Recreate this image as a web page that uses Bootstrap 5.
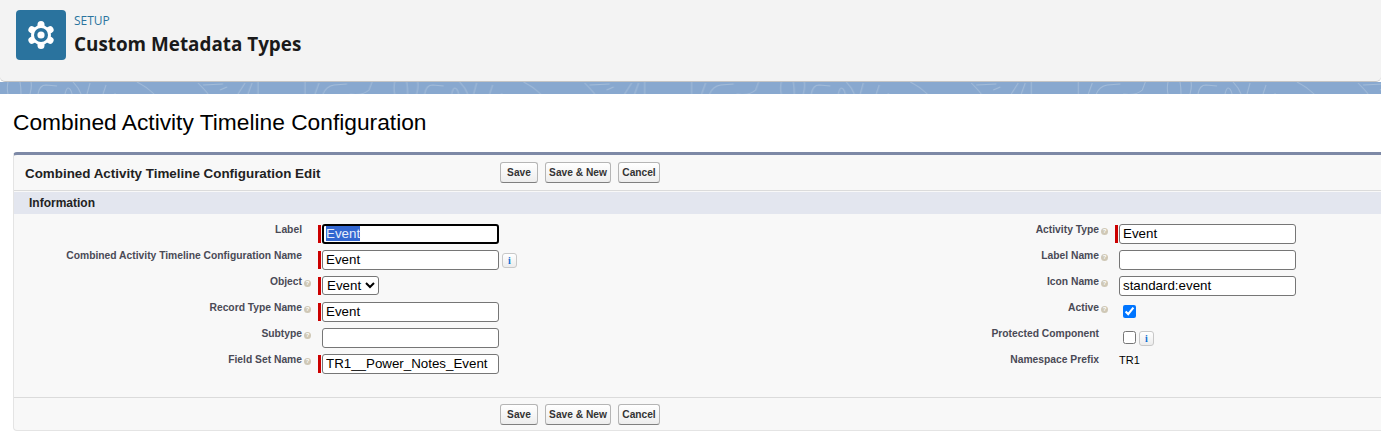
<!DOCTYPE html>
<html lang="en">
<head>
<meta charset="utf-8">
<title>Custom Metadata Types</title>
<link href="https://cdn.jsdelivr.net/npm/bootstrap@5.3.0/dist/css/bootstrap.min.css" rel="stylesheet">
<style>
html,body{height:444px;overflow:hidden;background:#fff;margin:0}
body{font-family:"Liberation Sans",Arial,sans-serif;color:#000}
.setup-head{height:82px;background:#f3f3f3;border-bottom:1px solid #c4c4c4;border-radius:0 0 5px 5px;padding:10px 16px 0;gap:8px}
.setup-tile{width:50px;height:50px;background:#2a739e;border-radius:4px}
.setup-eyebrow{font-family:"Open Sans",sans-serif;font-size:12px;line-height:14px;color:#2a739e;margin-top:4px}
.setup-title{font-family:"Open Sans",sans-serif;font-weight:700;font-size:18.85px;line-height:24px;color:#1a1a1a;margin-top:4px}
.band{height:12px;display:block;width:100%}
.page-name{font-size:22.75px;line-height:28px;font-weight:400;margin:0;padding:14px 0 0 13px;height:58px;color:#000}
.edit-panel{margin-left:13px;background:#f8f8f8;border:1px solid #e4e4e4;border-top:3px solid #7d89a6;border-right:0;border-radius:4px 0 0 4px;height:279px}
.panel-bar{height:36px;padding:0 0 0 11px;border-bottom:1px solid #dbdbdb}
.panel-bottom{height:33px;border-top:1px solid #dbdbdb;padding:6px 0 0 486px}
.bar-title{width:475px;font-size:13.4px;line-height:16px;padding-top:2px;font-weight:700;color:#222}
.bar-actions{gap:7px}
.sf-btn{font-family:"Liberation Sans",Arial,sans-serif;font-size:10.2px;font-weight:700;color:#333;height:21px;padding:0;white-space:nowrap;border:1px solid #b5b5b5;border-bottom-color:#7f7f7f;border-radius:3px;background:linear-gradient(#fff,#ededed)}
.btn-narrow{width:38px}.btn-wide{width:66px}.btn-mid{width:42px}
.section-bar{height:22px;background:#e3e6ef;margin-top:1px;padding-left:15px;font-size:12px;font-weight:700;line-height:22px;color:#222}
.form-area{display:grid;grid-template-columns:686px 1fr;padding-top:10px;flex:1}
.field-col{display:grid;grid-auto-rows:26px}
.left-col{grid-template-columns:297px 1fr}
.right-col{grid-template-columns:408px 1fr}
.field-name{font-size:10.3px;font-weight:700;color:#4a4a56;line-height:12px;text-align:right;white-space:nowrap}
.no-help{padding-right:9px}
.help-dot{display:inline-block;width:7px;height:7px;border-radius:50%;background:#cfc8b6;margin-left:2px;vertical-align:0;color:#fff;font-size:6px;line-height:7px;text-align:center}
.field-val{display:flex;align-items:flex-start;gap:3px;position:relative;padding-left:11px}
.req::before{content:"";position:absolute;left:7px;top:1px;width:3px;height:18px;background:#c00}
.sf-input{font-family:"Liberation Sans",Arial,sans-serif;font-size:13.33px;color:#000;width:177px;height:20px;border:1px solid #767676;border-radius:3px;padding:0 3px 2px;background:#fff;outline:0}
.sf-input.is-active{border:2px solid #000;padding:0 2px 2px}
.sf-input::selection{background:#3367d1;color:#e8eefc}
.sf-select{font-family:"Liberation Sans",Arial,sans-serif;font-size:13.33px;width:57px;height:19px;border:1px solid #767676;border-radius:3px;background:#fff;padding:0;color:#000}
.sf-check{width:13px;height:13px;margin:3px 0 0 4px;accent-color:#0075ff}
.info-btn{width:15px;height:15px;border:1px solid #c8c8c8;border-radius:3px;background:linear-gradient(#fff,#ececec);color:#0b6fd3;font:700 10px/13px "Liberation Serif",serif;text-align:center;margin-top:3px}
.plain-val{font-size:11px;color:#000;line-height:13px}
</style>
</head>
<body>
<header class="setup-head d-flex">
  <div class="setup-tile d-flex align-items-center justify-content-center">
    <svg width="30" height="30" viewBox="-15 -15 30 30" aria-hidden="true">
      <circle r="10" fill="#fff"/>
      <g stroke="#fff" stroke-width="7" stroke-linecap="round">
        <line x1="0" y1="-10.5" x2="0" y2="10.5"/>
        <line x1="-9.1" y1="-5.25" x2="9.1" y2="5.25"/>
        <line x1="-9.1" y1="5.25" x2="9.1" y2="-5.25"/>
      </g>
      <circle r="7" fill="#2a739e"/><circle r="3.6" fill="#fff"/>
    </svg>
  </div>
  <div>
    <div class="setup-eyebrow">SETUP</div>
    <div class="setup-title">Custom Metadata Types</div>
  </div>
</header>
<svg class="band" width="1381" height="12" aria-hidden="true">
  <defs><pattern id="swirl" width="386.67" height="12" patternUnits="userSpaceOnUse" x="0" y="0">
    <path fill="none" stroke="#a3bcd9" stroke-width="1" d="M8 0c-1 5-1 8 0 12M20 0c1 5 1 8 1 12M31 0c1 5 0 8-1 12M38 12c1-6 3-9 8-9l11 1M65 12c1-4 2-6 3-6s3 2 4 6M73 0c3 3 6 7 8 12M87 12l3-11M103 12l3-9M115 1v0M115 11v1M137 0c6 3 12 7 17 12M198 1c3 3 7 7 10 11M203 3l20-1M220 8l7-3M238 12l7-11M248 12l4-11M258 0v12M305 0v12M315 12l4-11M323 12c2-5 5-8 11-9l13-1M350 12c8 1 15 0 19-4l3-8"/>
  </pattern></defs>
  <rect width="100%" height="12" fill="#88a8cf"/>
  <rect width="100%" height="12" fill="url(#swirl)"/>
</svg>
<h1 class="page-name">Combined Activity Timeline Configuration</h1>
<main class="edit-panel d-flex flex-column">
  <div class="panel-bar d-flex align-items-center">
    <div class="bar-title">Combined Activity Timeline Configuration Edit</div>
    <div class="bar-actions d-flex"><button class="sf-btn btn-narrow">Save</button><button class="sf-btn btn-wide">Save &amp; New</button><button class="sf-btn btn-mid">Cancel</button></div>
  </div>
  <div class="section-bar">Information</div>
  <div class="form-area">
    <div class="field-col left-col">
      <div class="field-name no-help">Label</div><div class="field-val req"><input id="first" class="sf-input is-active" value="Event"></div>
      <div class="field-name no-help">Combined Activity Timeline Configuration Name</div><div class="field-val req"><input class="sf-input" value="Event"><span class="info-btn">i</span></div>
      <div class="field-name">Object<span class="help-dot">?</span></div><div class="field-val req"><select class="sf-select"><option>Event</option></select></div>
      <div class="field-name">Record Type Name<span class="help-dot">?</span></div><div class="field-val req"><input class="sf-input" value="Event"></div>
      <div class="field-name">Subtype<span class="help-dot">?</span></div><div class="field-val"><input class="sf-input"></div>
      <div class="field-name">Field Set Name<span class="help-dot">?</span></div><div class="field-val req"><input class="sf-input" value="TR1__Power_Notes_Event"></div>
    </div>
    <div class="field-col right-col">
      <div class="field-name">Activity Type<span class="help-dot">?</span></div><div class="field-val req"><input class="sf-input" value="Event"></div>
      <div class="field-name">Label Name<span class="help-dot">?</span></div><div class="field-val"><input class="sf-input"></div>
      <div class="field-name">Icon Name<span class="help-dot">?</span></div><div class="field-val"><input class="sf-input" value="standard:event"></div>
      <div class="field-name">Active<span class="help-dot">?</span></div><div class="field-val"><input class="sf-check" type="checkbox" checked></div>
      <div class="field-name no-help">Protected Component</div><div class="field-val"><input class="sf-check" type="checkbox"><span class="info-btn">i</span></div>
      <div class="field-name no-help">Namespace Prefix</div><div class="field-val"><span class="plain-val">TR1</span></div>
    </div>
  </div>
  <div class="panel-bottom">
    <div class="bar-actions d-flex"><button class="sf-btn btn-narrow">Save</button><button class="sf-btn btn-wide">Save &amp; New</button><button class="sf-btn btn-mid">Cancel</button></div>
  </div>
</main>
<script src="https://cdn.jsdelivr.net/npm/bootstrap@5.3.0/dist/js/bootstrap.bundle.min.js"></script>
<script>const first=document.getElementById('first');first.focus();first.select();</script>
</body>
</html>
